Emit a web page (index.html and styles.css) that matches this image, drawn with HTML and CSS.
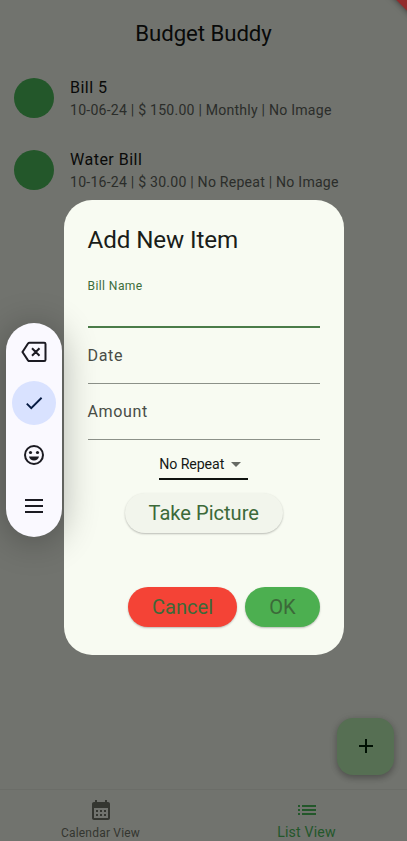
FILE: index.html
```
<!DOCTYPE html>
<html lang="en">
<head>
<meta charset="utf-8">
<title>Budget Buddy</title>
<link rel="stylesheet" href="styles.css">
</head>
<body>
<div class="app">
  <div class="ribbon"></div>
  <header class="app-bar"><h1>Budget Buddy</h1></header>
  <main class="bills">
    <div class="bill">
      <span class="avatar"></span>
      <div><div class="bill-name">Bill 5</div><div class="bill-info">10-06-24 | $ 150.00 | Monthly | No Image</div></div>
    </div>
    <div class="bill">
      <span class="avatar"></span>
      <div><div class="bill-name">Water Bill</div><div class="bill-info">10-16-24 | $ 30.00 | No Repeat | No Image</div></div>
    </div>
  </main>
  <button class="fab" aria-label="Add"><svg viewBox="0 0 24 24"><path d="M19 13h-6v6h-2v-6H5v-2h6V5h2v6h6z"/></svg></button>
  <nav class="tabs">
    <div class="tab">
      <svg viewBox="0 0 24 24"><path fill-rule="evenodd" d="M19 4h-1V2h-2v2H8V2H6v2H5c-1.100 0-2 .9-2 2v14c0 1.100.9 2 2 2h14c1.100 0 2-.9 2-2V6c0-1.100-.9-2-2-2zm0 16H5V10h14zM7 12h2v2H7zm4 0h2v2h-2zm4 0h2v2h-2zM7 16h2v2H7zm4 0h2v2h-2zm4 0h2v2h-2z"/></svg>
      <span>Calendar View</span>
    </div>
    <div class="tab active">
      <svg viewBox="0 0 24 24"><path d="M3 13h2v-2H3zm0 4h2v-2H3zm0-8h2V7H3zm4 4h14v-2H7zm0 4h14v-2H7zM7 7v2h14V7z"/></svg>
      <span>List View</span>
    </div>
  </nav>

  <section class="dialog">
    <h2>Add New Item</h2>
    <div class="field focused"><label>Bill Name</label></div>
    <div class="field"><label>Date</label></div>
    <div class="field"><label>Amount</label></div>
    <div class="select"><span>No Repeat</span><i class="caret"></i></div>
    <button class="pill picture">Take Picture</button>
    <div class="actions">
      <button class="pill cancel">Cancel</button>
      <button class="pill ok">OK</button>
    </div>
  </section>

  <aside class="key-tools">
    <span class="tool"><svg class="backspace" viewBox="0 0 26 22"><path d="M8.500 1.700H23.200Q24.500 1.700 24.500 3V18.800Q24.500 20.100 23.200 20.100H8.500Q7.600 20.100 7 19.300L1.500 11L7 2.500Q7.600 1.700 8.500 1.700ZM11 7.200l7.500 7.500M18.500 7.200L11 14.700"/></svg></span>
    <span class="tool selected"><svg viewBox="0 0 24 24"><path d="M9 16.170L4.830 12l-1.420 1.410L9 19 21 7l-1.410-1.410z"/></svg></span>
    <span class="tool"><svg viewBox="0 0 24 24"><path fill-rule="evenodd" d="M12 2a10 10 0 1 0 0 20a10 10 0 1 0 0-20zm0 2a8 8 0 1 1 0 16a8 8 0 1 1 0-16z"/><circle cx="8.500" cy="9.500" r="1.600"/><circle cx="15.500" cy="9.500" r="1.600"/><path d="M7 13.500h10c-.6 2.400-2.500 4-5 4s-4.400-1.600-5-4z"/></svg></span>
    <span class="tool"><svg viewBox="0 0 24 24"><path d="M3 5h18v2H3zm0 6h18v2H3zm0 6h18v2H3z"/></svg></span>
  </aside>
</div>
</body>
</html>
```
FILE: styles.css
```
* { box-sizing: border-box; }
body { margin: 0; font-family: Roboto, sans-serif; }
h1, h2 { margin: 0; font-weight: 400; }
button { border: 0; padding: 0; font-family: inherit; }
svg { display: block; fill: currentColor; }

.app {
  position: relative;
  width: 407px;
  height: 841px;
  overflow: hidden;
  display: flex;
  flex-direction: column;
  background: #71736e;
}
.ribbon {
  position: absolute;
  top: -22px;
  right: -22px;
  width: 32px;
  height: 32px;
  background: #922b2c;
  transform: rotate(45deg);
  box-shadow: 0 0 6px rgba(0, 0, 0, .5);
}
.app-bar { height: 62px; padding-top: 4px; display: flex; align-items: center; justify-content: center; }
h1 { font-size: 22.200px; line-height: 28px; color: #090a09; letter-spacing: -.05px; }

.bills { flex: 1; }
.bill { height: 72px; padding-left: 13.500px; display: flex; align-items: center; gap: 16px; white-space: nowrap; }
.avatar { width: 40.500px; height: 40.500px; border-radius: 50%; background: #23572a; }
.bill-name { font-size: 16.100px; line-height: 24px; letter-spacing: .45px; color: #090a09; }
.bill-info { font-size: 14.100px; line-height: 20px; letter-spacing: .22px; color: #2b2d2a; }

.fab {
  position: absolute;
  left: 337px;
  top: 718px;
  width: 57px;
  height: 56.500px;
  border-radius: 16px;
  display: grid;
  place-items: center;
  background: #566f53;
  color: #001003;
  box-shadow: 0 3px 6px rgba(0, 0, 0, .24), 0 1px 8px rgba(0, 0, 0, .1);
}
.fab svg { width: 24px; height: 24px; }

.tabs { height: 52px; border-top: 1px solid #6b6d68; display: flex; }
.tab { flex: 1; display: flex; flex-direction: column; align-items: center; padding-top: 8px; color: #343630; font-size: 12px; letter-spacing: .2px; padding-right: 2px; }
.tab svg { width: 24px; height: 24px; }
.tab span { line-height: 16px; margin-top: 3px; }
.tab.active { color: #23572a; font-size: 14.100px; padding-right: 0; padding-left: 3px; letter-spacing: .2px; }
.tab.active span { margin-top: 2px; }

.dialog {
  position: absolute;
  left: 63.500px;
  top: 199.500px;
  width: 280.500px;
  height: 455.500px;
  padding: 24px 24px 28px;
  border-radius: 28px;
  background: #f8fbf2;
  display: flex;
  flex-direction: column;
}
h2 { font-size: 24.200px; line-height: 32px; color: #1a1d19; letter-spacing: -.1px; white-space: nowrap; }
.field { height: 56px; border-bottom: 1px solid #8c9189; display: flex; align-items: center; color: #494d47; font-size: 16.100px; letter-spacing: .6px; }
.focused { height: 57px; margin-top: 15px; border-bottom: 2px solid #4b7c49; align-items: flex-start; color: #3d6d3c; font-size: 12.100px; line-height: 16px; letter-spacing: .4px; padding-top: 7px; }
.select { align-self: center; width: 89px; height: 31px; margin-top: 9px; border-bottom: 2px solid #101310; display: flex; align-items: center; justify-content: space-between; padding: 2px 7px 0 0; font-size: 14.200px; letter-spacing: -.1px; color: #151815; white-space: nowrap; }
.caret { border: 5px solid transparent; border-top-color: #666a64; border-bottom: 0; }
.pill { height: 40px; border-radius: 20px; font-size: 20.100px; letter-spacing: 0; color: #3c6939; box-shadow: 0 1px 2px rgba(0, 0, 0, .25); }
.picture { align-self: center; width: 158px; margin-top: 13px; background: #f2f5ec; }
.actions { display: flex; justify-content: flex-end; gap: 8px; margin-top: auto; }
.cancel { width: 109px; background: #f44336; }
.ok { width: 75px; background: #4caf50; }

.key-tools {
  position: absolute;
  left: 5.500px;
  top: 323px;
  width: 56.500px;
  height: 214px;
  padding: 7px 0;
  border-radius: 29px;
  display: flex;
  flex-direction: column;
  align-items: center;
  gap: 7.400px;
  background: #faf9ff;
  color: #1b1b22;
  box-shadow: 0 4px 36px rgba(0, 0, 0, .3);
}
.tool { width: 44px; height: 44px; flex: none; border-radius: 50%; display: grid; place-items: center; }
.tool svg { width: 24px; height: 24px; }
.tool .backspace { width: 26px; height: 22px; fill: none; stroke: currentColor; stroke-width: 2; }
.selected { background: #d9e2ff; color: #071b42; }
.selected svg { width: 22px; height: 22px; }
```
